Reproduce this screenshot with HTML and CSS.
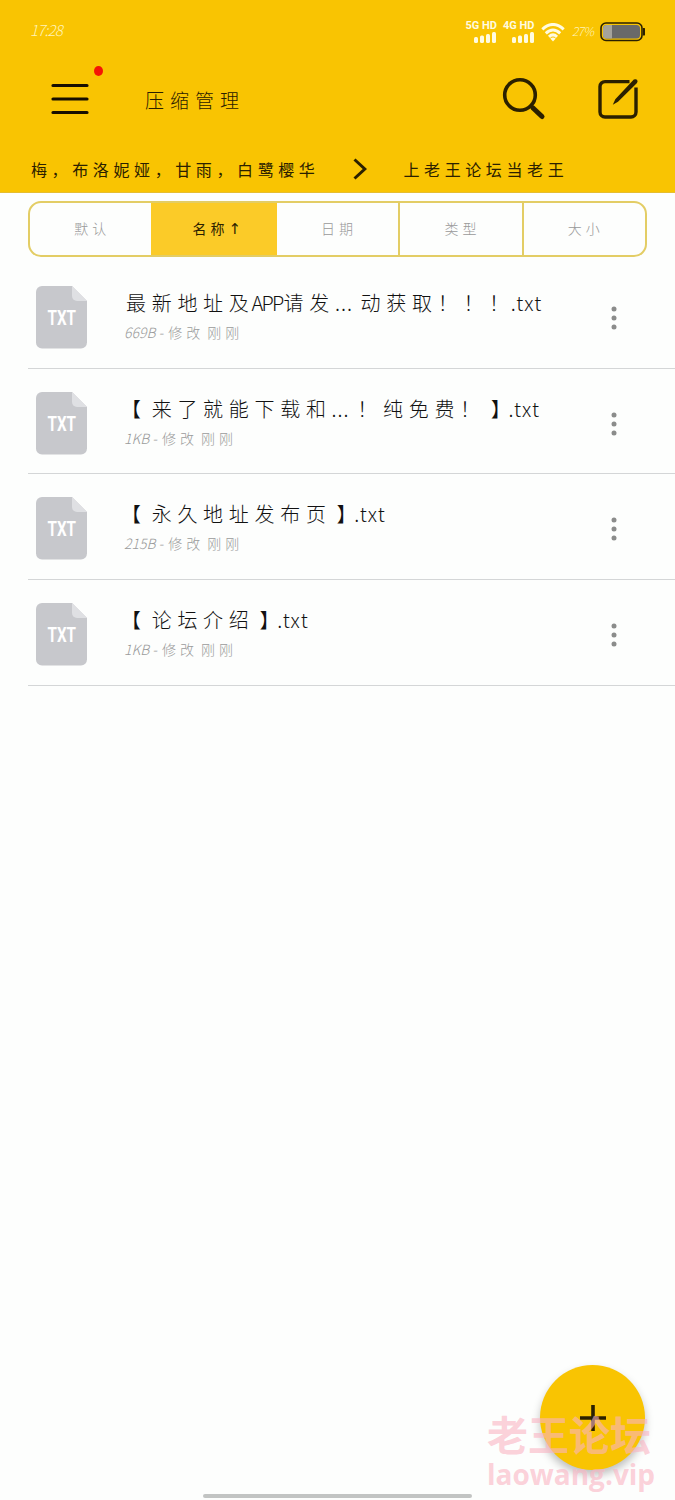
FILE: index.html
```html
<!DOCTYPE html>
<html lang="zh-CN">
<head>
    <meta charset="UTF-8">
    <meta name="viewport" content="width=device-width, initial-scale=1.0">
    <title>压缩管理</title>
    <link rel="stylesheet" href="styles.css">
</head>
<body>
    <div class="header">
        <div class="status-bar">
            <span class="time">17:28</span>
            <div class="signal">
                <span>5G HD</span>
                <svg width="22" height="11" viewBox="0 0 22 11" fill="#fffbe0"><rect x="0" y="5" width="4" height="6" rx="1.5"/><rect x="6" y="3.5" width="4" height="7.5" rx="1.5"/><rect x="12" y="2" width="4" height="9" rx="1.5"/><rect x="18" y="0" width="4" height="11" rx="1.5"/></svg>
            </div>
            <div class="signal">
                <span>4G HD</span>
                <svg width="22" height="11" viewBox="0 0 22 11" fill="#fffbe0"><rect x="0" y="5" width="4" height="6" rx="1.5"/><rect x="6" y="3.5" width="4" height="7.5" rx="1.5"/><rect x="12" y="2" width="4" height="9" rx="1.5"/><rect x="18" y="0" width="4" height="11" rx="1.5"/></svg>
            </div>
            <svg class="wifi" width="24" height="19" viewBox="0 0 24 19" fill="none" stroke="#fffbe0" stroke-width="3">
                <path d="M1.300 6.300Q12-3.300 22.700 6.300M4.800 10.300Q12 3.700 19.200 10.300M8 13.800Q12 10 16 13.800"/>
                <path d="M9.300 15.500Q12 13.500 14.700 15.500L12 18.600z" fill="#fffbe0" stroke="none"/>
            </svg>
            <span class="percent">27%</span>
            <svg class="battery" width="46" height="20" viewBox="0 0 46 20">
                <rect x="1" y="1" width="41" height="17.5" rx="5" fill="#f9c402" stroke="#2b2000" stroke-width="1.6"/>
                <rect x="3" y="3" width="37" height="13.5" rx="3.5" fill="#696969"/>
                <path d="M12 3v13.5H6.5A3.5 3.5 0 0 1 3 13V6.500A3.5 3.500 0 0 1 6.500 3z" fill="#a5a39c"/>
                <path d="M43 6h1.500q.5 0 .5 1v5.500q0 1-.5 1H43z" fill="#2b2000"/>
            </svg>
        </div>

        <div class="toolbar">
            <div class="menu">
                <svg width="38" height="32" viewBox="0 0 38 32" stroke="#170e00" stroke-width="3.2" stroke-linecap="round"><path d="M2 2.500h34M2 16h34M2 29.500h34"/></svg>
                <span class="dot"></span>
            </div>
            <h1>压缩管理</h1>
            <svg class="search" width="44" height="44" viewBox="0 0 44 44" fill="none" stroke="#2b2000" stroke-linecap="round">
                <circle cx="18" cy="18" r="15.300" stroke-width="3.600"/>
                <path d="M29 29l2 2" stroke-width="3.600"/>
                <path d="M31 31l9 8.500" stroke-width="5"/>
            </svg>
            <svg class="edit" width="42" height="42" viewBox="0 0 42 42" fill="none" stroke="#2b2000" stroke-linecap="butt">
                <path d="M32.500 3.600H8A5 5 0 0 0 3 8.600V34a5 5 0 0 0 5 5h26a5 5 0 0 0 5-5V9.500" stroke-width="3.400"/>
                <path d="M36.800 1.600q2-1 3.200.2t0 3.200L21 23.800l-5.200 3 2.500-5.500z" fill="#2b2000" stroke="none"/>
            </svg>
        </div>

        <div class="breadcrumb">
            <span class="parent">梅<i>，</i>布洛妮娅<i>，</i>甘雨<i>，</i>白鹭樱华</span>
            <svg width="15" height="22" viewBox="0 0 15 22" fill="none" stroke="#2b2000" stroke-width="3"><path d="M1.500 1.500L11.800 11 1.500 20.500"/></svg>
            <span class="current">上老王论坛当老王</span>
        </div>
    </div>

    <div class="tabs">
        <a class="tab first">默认</a>
        <a class="tab active">名称<b>↑</b></a>
        <a class="tab">日期</a>
        <a class="tab">类型</a>
        <a class="tab">大小</a>
    </div>

    <div class="file-list">
        <div class="file">
            <svg class="file-icon" width="51" height="63" viewBox="0 0 51 63">
                <path d="M6 0h30l15 15v41.500a6 6 0 0 1-6 6H6a6 6 0 0 1-6-6V6a6 6 0 0 1 6-6z" fill="#c7c8cc"/>
                <path d="M36 0l15 15H41a5 5 0 0 1-5-5z" fill="#dfe0e3"/>
                <text x="11.500" y="38.500" textLength="28.500" lengthAdjust="spacingAndGlyphs">TXT</text>
            </svg>
            <div class="info">
                <div class="name">最新地址及<span class="latin app">APP</span>请发<span class="dots">...</span>动获取<i class="marks">！！！</i><span class="latin">.txt</span></div>
                <div class="meta"><span class="size">669B -</span>修改<span class="ago">刚刚</span></div>
            </div>
            <svg class="more" width="6" height="24" viewBox="0 0 6 24" fill="#8b8c8b"><circle cx="3" cy="3" r="2.500"/><circle cx="3" cy="12" r="2.500"/><circle cx="3" cy="21" r="2.500"/></svg>
        </div>
        <div class="file">
            <svg class="file-icon" width="51" height="63" viewBox="0 0 51 63">
                <path d="M6 0h30l15 15v41.500a6 6 0 0 1-6 6H6a6 6 0 0 1-6-6V6a6 6 0 0 1 6-6z" fill="#c7c8cc"/>
                <path d="M36 0l15 15H41a5 5 0 0 1-5-5z" fill="#dfe0e3"/>
                <text x="11.500" y="38.500" textLength="28.500" lengthAdjust="spacingAndGlyphs">TXT</text>
            </svg>
            <div class="info">
                <div class="name"><span class="open">【</span>来了就能下载和<span class="dots">...</span><i>！</i>纯免费<i>！</i><span class="close">】</span><span class="latin">.txt</span></div>
                <div class="meta"><span class="size">1KB -</span>修改<span class="ago">刚刚</span></div>
            </div>
            <svg class="more" width="6" height="24" viewBox="0 0 6 24" fill="#8b8c8b"><circle cx="3" cy="3" r="2.500"/><circle cx="3" cy="12" r="2.500"/><circle cx="3" cy="21" r="2.500"/></svg>
        </div>
        <div class="file">
            <svg class="file-icon" width="51" height="63" viewBox="0 0 51 63">
                <path d="M6 0h30l15 15v41.500a6 6 0 0 1-6 6H6a6 6 0 0 1-6-6V6a6 6 0 0 1 6-6z" fill="#c7c8cc"/>
                <path d="M36 0l15 15H41a5 5 0 0 1-5-5z" fill="#dfe0e3"/>
                <text x="11.500" y="38.500" textLength="28.500" lengthAdjust="spacingAndGlyphs">TXT</text>
            </svg>
            <div class="info">
                <div class="name"><span class="open">【</span>永久地址发布页<span class="close">】</span><span class="latin">.txt</span></div>
                <div class="meta"><span class="size">215B -</span>修改<span class="ago">刚刚</span></div>
            </div>
            <svg class="more" width="6" height="24" viewBox="0 0 6 24" fill="#8b8c8b"><circle cx="3" cy="3" r="2.500"/><circle cx="3" cy="12" r="2.500"/><circle cx="3" cy="21" r="2.500"/></svg>
        </div>
        <div class="file">
            <svg class="file-icon" width="51" height="63" viewBox="0 0 51 63">
                <path d="M6 0h30l15 15v41.500a6 6 0 0 1-6 6H6a6 6 0 0 1-6-6V6a6 6 0 0 1 6-6z" fill="#c7c8cc"/>
                <path d="M36 0l15 15H41a5 5 0 0 1-5-5z" fill="#dfe0e3"/>
                <text x="11.500" y="38.500" textLength="28.500" lengthAdjust="spacingAndGlyphs">TXT</text>
            </svg>
            <div class="info">
                <div class="name"><span class="open">【</span>论坛介绍<span class="close">】</span><span class="latin">.txt</span></div>
                <div class="meta"><span class="size">1KB -</span>修改<span class="ago">刚刚</span></div>
            </div>
            <svg class="more" width="6" height="24" viewBox="0 0 6 24" fill="#8b8c8b"><circle cx="3" cy="3" r="2.500"/><circle cx="3" cy="12" r="2.500"/><circle cx="3" cy="21" r="2.500"/></svg>
        </div>
    </div>

    <div class="fab">
        <svg width="26" height="26" viewBox="0 0 26 26" stroke="#2b2000" stroke-width="3.600"><path d="M0 13h26M13 0v26"/></svg>
    </div>

    <div class="watermark">
        <div class="watermark-name">老王论坛</div>
        <div class="watermark-url">laowang.vip</div>
    </div>

    <div class="home-bar"></div>
</body>
</html>
```
FILE: styles.css
```css
* {
    box-sizing: border-box;
}

body {
    margin: 0;
    position: relative;
    height: 1500px;
    overflow: hidden;
    background-color: #fdfefd;
    font-family: "Noto Sans CJK SC", sans-serif;
    font-weight: 300;
    color: #111;
    white-space: nowrap;
}

svg {
    display: block;
    flex: none;
}

i {
    font-style: normal;
    font-family: "Noto Sans CJK TC", sans-serif;
}

.header {
    height: 193px;
    background-color: #f9c402;
    border-bottom: 1px solid #e5bd30;
}

.status-bar {
    display: flex;
    height: 60px;
    padding: 20px 29px 0 30px;
    color: #fff3b8;
}

.time {
    flex: 1;
    font-size: 15px;
    line-height: 20px;
    font-style: italic;
    letter-spacing: -0.8px;
}

.signal {
    width: 31px;
    margin-right: 6.5px;
    display: flex;
    flex-direction: column;
    align-items: flex-end;
    font: bold 11px/12px Roboto, sans-serif;
    color: #fffbe0;
}

.signal svg {
    margin-right: 1px;
}

.wifi {
    margin-top: 3px;
}

.percent {
    width: 28px;
    margin-left: 7px;
    font-size: 12px;
    line-height: 21px;
    font-style: italic;
    letter-spacing: -0.8px;
}

.battery {
    margin-top: 2px;
}

.toolbar {
    display: flex;
    align-items: center;
    height: 78px;
    padding: 0 36px 0 51px;
}

.menu {
    position: relative;
}

.dot {
    position: absolute;
    top: -17px;
    left: 43px;
    width: 9px;
    height: 10px;
    border-radius: 50%;
    background-color: #f41505;
}

.toolbar h1 {
    flex: 1;
    margin: 0 0 0 56px;
    font-size: 19px;
    font-weight: 300;
    letter-spacing: 6px;
    color: #2b2000;
}

.search {
    margin-right: 51px;
}

.breadcrumb {
    display: flex;
    align-items: center;
    height: 62px;
    padding: 0 0 0 31px;
    font-size: 16px;
    font-weight: 400;
    letter-spacing: 4.6px;
    line-height: 24px;
    color: #2b2000;
}

.breadcrumb svg {
    margin: 0 35px 0 34px;
}

.tabs {
    display: flex;
    width: 619px;
    height: 56px;
    margin: 8px 0 0 28px;
    border: 2px solid #e3cd65;
    border-radius: 13px;
    overflow: hidden;
}

.tab {
    flex: 1;
    padding-left: 3px;
    border-right: 2px solid #e3cd65;
    font-size: 14px;
    line-height: 50px;
    letter-spacing: 4px;
    text-align: center;
    color: #999;
}

.tab:last-child {
    border-right: none;
}

.tab.first {
    border-color: #fbcb28;
}

.tab.active {
    background-color: #fbcb28;
    border-color: #fbcb28;
    font-weight: 400;
    color: #2b2000;
}

.tab b {
    display: inline-block;
    width: 10px;
    font-family: "DejaVu Sans", sans-serif;
    font-size: 15px;
    font-weight: normal;
}

.file-list {
    margin: 6px 0 0 28px;
}

.file {
    display: flex;
    height: 105.7px;
    padding: 23px 58px 0 8px;
    border-bottom: 1px solid #d4d6d7;
}

.file-icon text {
    font-family: Roboto, sans-serif;
    font-size: 20px;
    font-weight: bold;
    fill: #fff;
}

.info {
    flex: 1;
    margin-left: 37px;
}

.name {
    margin-left: 2px;
    height: 35px;
    font-size: 20px;
    line-height: 34px;
    letter-spacing: 5.7px;
}

.latin {
    display: inline-block;
    width: 32px;
    letter-spacing: 1.3px;
}

.app {
    margin-left: -3px;
    letter-spacing: -1.8px;
}

.dots {
    display: inline-block;
    width: 25.7px;
    letter-spacing: 1px;
}

.marks {
    margin-right: -4px;
}

/* half-width brackets, spaced like the rest of the text */
.open,
.close {
    font-feature-settings: "halt";
}

.open {
    margin: 0 5px 0 5px;
}

.close {
    margin: 0 2px 0 5px;
}

.meta {
    font-size: 14px;
    line-height: 23px;
    letter-spacing: 4px;
    color: #9a9b9b;
}

.size {
    margin-right: 5px;
    font-style: italic;
    letter-spacing: 0;
}

.ago {
    margin-left: 3px;
}

.more {
    margin-top: 20px;
}

.fab {
    position: absolute;
    left: 540px;
    top: 1365px;
    width: 105px;
    height: 105px;
    display: flex;
    align-items: center;
    justify-content: center;
    border-radius: 50%;
    background-color: #f9c402;
    box-shadow: 0 5px 9px rgba(0, 0, 0, 0.25);
}

.watermark {
    position: absolute;
    left: 487px;
    top: 1407px;
    color: rgba(250, 180, 195, 0.62);
    font-weight: bold;
}

.watermark-name {
    font-family: "Noto Sans CJK SC", sans-serif;
    font-size: 41px;
    line-height: 52px;
}

.watermark-url {
    font-family: "Open Sans", sans-serif;
    font-size: 28px;
    line-height: 30px;
}

.home-bar {
    position: absolute;
    left: 203px;
    top: 1494px;
    width: 269px;
    height: 4px;
    border-radius: 2px;
    background-color: #c2c4c3;
}
```
